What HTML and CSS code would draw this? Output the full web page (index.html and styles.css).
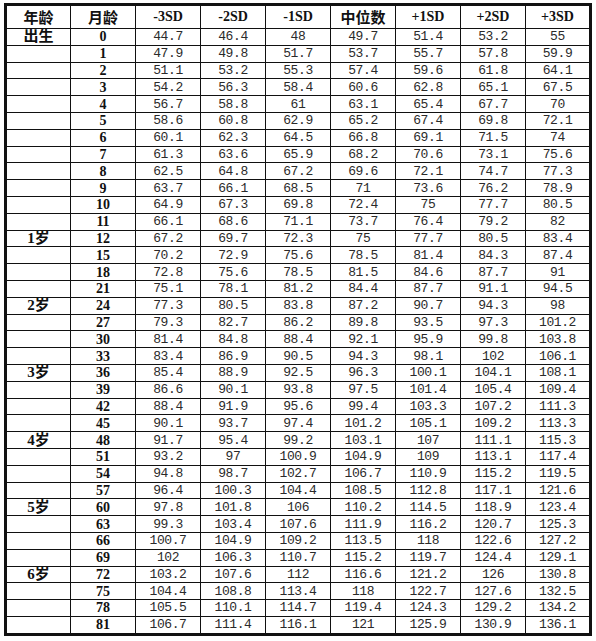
FILE: index.html
```html
<!DOCTYPE html>
<html lang="zh">
<head>
<meta charset="utf-8">
<link rel="stylesheet" href="styles.css">
</head>
<body>
<table class="grid">
<colgroup>
<col class="c"><col class="c"><col class="c"><col class="c"><col class="c"><col class="c"><col class="c"><col class="c"><col class="c">
</colgroup>
<thead>
<tr class="head"><th class="cjk">年龄</th><th class="cjk">月龄</th><th>-3SD</th><th>-2SD</th><th>-1SD</th><th class="cjk">中位数</th><th>+1SD</th><th>+2SD</th><th>+3SD</th></tr>
</thead>
<tbody>
<tr><td class="age">出生</td><td class="m">0</td><td>44.7</td><td>46.4</td><td>48</td><td>49.7</td><td>51.4</td><td>53.2</td><td>55</td></tr>
<tr><td class="age"></td><td class="m">1</td><td>47.9</td><td>49.8</td><td>51.7</td><td>53.7</td><td>55.7</td><td>57.8</td><td>59.9</td></tr>
<tr><td class="age"></td><td class="m">2</td><td>51.1</td><td>53.2</td><td>55.3</td><td>57.4</td><td>59.6</td><td>61.8</td><td>64.1</td></tr>
<tr><td class="age"></td><td class="m">3</td><td>54.2</td><td>56.3</td><td>58.4</td><td>60.6</td><td>62.8</td><td>65.1</td><td>67.5</td></tr>
<tr><td class="age"></td><td class="m">4</td><td>56.7</td><td>58.8</td><td>61</td><td>63.1</td><td>65.4</td><td>67.7</td><td>70</td></tr>
<tr><td class="age"></td><td class="m">5</td><td>58.6</td><td>60.8</td><td>62.9</td><td>65.2</td><td>67.4</td><td>69.8</td><td>72.1</td></tr>
<tr><td class="age"></td><td class="m">6</td><td>60.1</td><td>62.3</td><td>64.5</td><td>66.8</td><td>69.1</td><td>71.5</td><td>74</td></tr>
<tr><td class="age"></td><td class="m">7</td><td>61.3</td><td>63.6</td><td>65.9</td><td>68.2</td><td>70.6</td><td>73.1</td><td>75.6</td></tr>
<tr><td class="age"></td><td class="m">8</td><td>62.5</td><td>64.8</td><td>67.2</td><td>69.6</td><td>72.1</td><td>74.7</td><td>77.3</td></tr>
<tr><td class="age"></td><td class="m">9</td><td>63.7</td><td>66.1</td><td>68.5</td><td>71</td><td>73.6</td><td>76.2</td><td>78.9</td></tr>
<tr><td class="age"></td><td class="m">10</td><td>64.9</td><td>67.3</td><td>69.8</td><td>72.4</td><td>75</td><td>77.7</td><td>80.5</td></tr>
<tr><td class="age"></td><td class="m">11</td><td>66.1</td><td>68.6</td><td>71.1</td><td>73.7</td><td>76.4</td><td>79.2</td><td>82</td></tr>
<tr><td class="age">1岁</td><td class="m">12</td><td>67.2</td><td>69.7</td><td>72.3</td><td>75</td><td>77.7</td><td>80.5</td><td>83.4</td></tr>
<tr><td class="age"></td><td class="m">15</td><td>70.2</td><td>72.9</td><td>75.6</td><td>78.5</td><td>81.4</td><td>84.3</td><td>87.4</td></tr>
<tr><td class="age"></td><td class="m">18</td><td>72.8</td><td>75.6</td><td>78.5</td><td>81.5</td><td>84.6</td><td>87.7</td><td>91</td></tr>
<tr><td class="age"></td><td class="m">21</td><td>75.1</td><td>78.1</td><td>81.2</td><td>84.4</td><td>87.7</td><td>91.1</td><td>94.5</td></tr>
<tr><td class="age">2岁</td><td class="m">24</td><td>77.3</td><td>80.5</td><td>83.8</td><td>87.2</td><td>90.7</td><td>94.3</td><td>98</td></tr>
<tr><td class="age"></td><td class="m">27</td><td>79.3</td><td>82.7</td><td>86.2</td><td>89.8</td><td>93.5</td><td>97.3</td><td>101.2</td></tr>
<tr><td class="age"></td><td class="m">30</td><td>81.4</td><td>84.8</td><td>88.4</td><td>92.1</td><td>95.9</td><td>99.8</td><td>103.8</td></tr>
<tr><td class="age"></td><td class="m">33</td><td>83.4</td><td>86.9</td><td>90.5</td><td>94.3</td><td>98.1</td><td>102</td><td>106.1</td></tr>
<tr><td class="age">3岁</td><td class="m">36</td><td>85.4</td><td>88.9</td><td>92.5</td><td>96.3</td><td>100.1</td><td>104.1</td><td>108.1</td></tr>
<tr><td class="age"></td><td class="m">39</td><td>86.6</td><td>90.1</td><td>93.8</td><td>97.5</td><td>101.4</td><td>105.4</td><td>109.4</td></tr>
<tr><td class="age"></td><td class="m">42</td><td>88.4</td><td>91.9</td><td>95.6</td><td>99.4</td><td>103.3</td><td>107.2</td><td>111.3</td></tr>
<tr><td class="age"></td><td class="m">45</td><td>90.1</td><td>93.7</td><td>97.4</td><td>101.2</td><td>105.1</td><td>109.2</td><td>113.3</td></tr>
<tr><td class="age">4岁</td><td class="m">48</td><td>91.7</td><td>95.4</td><td>99.2</td><td>103.1</td><td>107</td><td>111.1</td><td>115.3</td></tr>
<tr><td class="age"></td><td class="m">51</td><td>93.2</td><td>97</td><td>100.9</td><td>104.9</td><td>109</td><td>113.1</td><td>117.4</td></tr>
<tr><td class="age"></td><td class="m">54</td><td>94.8</td><td>98.7</td><td>102.7</td><td>106.7</td><td>110.9</td><td>115.2</td><td>119.5</td></tr>
<tr><td class="age"></td><td class="m">57</td><td>96.4</td><td>100.3</td><td>104.4</td><td>108.5</td><td>112.8</td><td>117.1</td><td>121.6</td></tr>
<tr><td class="age">5岁</td><td class="m">60</td><td>97.8</td><td>101.8</td><td>106</td><td>110.2</td><td>114.5</td><td>118.9</td><td>123.4</td></tr>
<tr><td class="age"></td><td class="m">63</td><td>99.3</td><td>103.4</td><td>107.6</td><td>111.9</td><td>116.2</td><td>120.7</td><td>125.3</td></tr>
<tr><td class="age"></td><td class="m">66</td><td>100.7</td><td>104.9</td><td>109.2</td><td>113.5</td><td>118</td><td>122.6</td><td>127.2</td></tr>
<tr><td class="age"></td><td class="m">69</td><td>102</td><td>106.3</td><td>110.7</td><td>115.2</td><td>119.7</td><td>124.4</td><td>129.1</td></tr>
<tr><td class="age">6岁</td><td class="m">72</td><td>103.2</td><td>107.6</td><td>112</td><td>116.6</td><td>121.2</td><td>126</td><td>130.8</td></tr>
<tr><td class="age"></td><td class="m">75</td><td>104.4</td><td>108.8</td><td>113.4</td><td>118</td><td>122.7</td><td>127.6</td><td>132.5</td></tr>
<tr><td class="age"></td><td class="m">78</td><td>105.5</td><td>110.1</td><td>114.7</td><td>119.4</td><td>124.3</td><td>129.2</td><td>134.2</td></tr>
<tr><td class="age"></td><td class="m">81</td><td>106.7</td><td>111.4</td><td>116.1</td><td>121</td><td>125.9</td><td>130.9</td><td>136.1</td></tr>
</tbody>
</table>
</body>
</html>
```
FILE: styles.css
```css
html, body {
  margin: 0;
  padding: 0;
  background: #fff;
}
body {
  padding: 3px 0 0 4px;
}
.grid {
  border-collapse: collapse;
  table-layout: fixed;
  width: 586px;
  border: 3px solid #111;
}
.c {
  width: 65px;
}
.grid th,
.grid td {
  border: 1px solid #111;
  padding: 0;
  text-align: center;
  vertical-align: middle;
  overflow: hidden;
  white-space: nowrap;
}
.head th {
  height: 22px;
  font-family: "Liberation Serif", "Noto Sans CJK SC", serif;
  font-weight: bold;
  font-size: 14px;
  color: #111;
  line-height: 22px;
}
.head th.cjk,
.age {
  font-family: "Noto Sans CJK SC", sans-serif;
  font-weight: bold;
  font-size: 15px;
  color: #111;
}
.grid td {
  height: 15.8px;
  line-height: 15px;
  font-family: "Liberation Mono", monospace;
  font-size: 13px;
  letter-spacing: -0.4px;
  color: #2a2a2a;
}
.grid td.age {
  font-family: "Liberation Serif", "Noto Sans CJK SC", serif;
  font-size: 15px;
  letter-spacing: 0;
  font-weight: bold;
  color: #111;
}
.grid td.m {
  font-family: "Liberation Serif", serif;
  font-weight: bold;
  font-size: 14px;
  letter-spacing: 0;
  color: #111;
}
```
